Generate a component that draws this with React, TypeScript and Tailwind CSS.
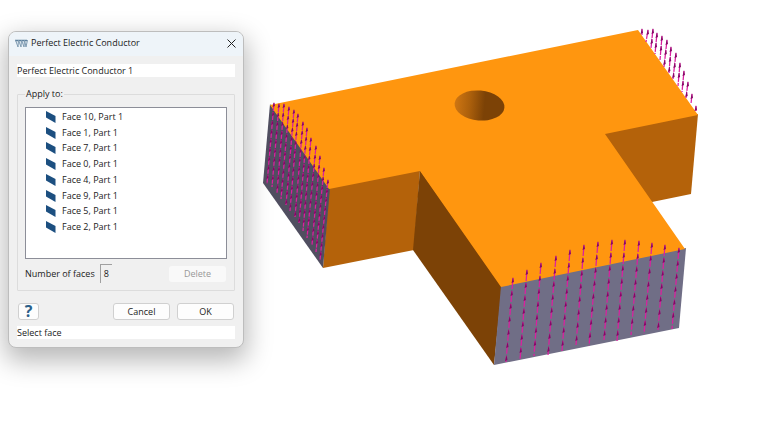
import { useId } from "react"

type Point = [number, number]

const faces = ["Face 10", "Face 1", "Face 7", "Face 0", "Face 4", "Face 9", "Face 5", "Face 2"]

/** Arrow columns per port: tip of the top arrow, foot of the lowest one. */
const frontColumns: [Point, Point][] = [
  [[513, 278], [506, 362]],
  [[527, 270], [520, 360]],
  [[541, 263], [534, 356]],
  [[556, 256], [548, 355]],
  [[570, 250], [562, 351]],
  [[584, 245], [576, 345]],
  [[598, 242], [589, 346]],
  [[612, 240], [604, 340]],
  [[625, 240], [617, 341]],
  [[639, 241], [631, 335]],
  [[652, 243], [644, 334]],
  [[665, 245], [658, 330]],
  [[679, 248], [672, 329]],
]

const leftColumns: [Point, Point][] = [
  [[274, 103], [267, 184]],
  [[279, 104], [272, 187]],
  [[284, 104], [277, 193]],
  [[289, 107], [281, 199]],
  [[294, 110], [286, 205]],
  [[298, 114], [290, 211]],
  [[303, 122], [295, 217]],
  [[307, 128], [299, 223]],
  [[311, 138], [303, 231]],
  [[316, 146], [307, 238]],
  [[320, 156], [312, 245]],
  [[324, 168], [316, 252]],
  [[328, 180], [320, 260]],
]

const rightColumns: [Point, Point][] = [
  [[642, 29], [642, 35]],
  [[648, 30], [646, 42]],
  [[653, 29], [651, 48]],
  [[657, 33], [655, 54]],
  [[662, 36], [660, 60]],
  [[667, 40], [664, 67]],
  [[671, 47], [669, 73]],
  [[676, 53], [673, 79]],
  [[680, 63], [678, 86]],
  [[684, 71], [682, 92]],
  [[688, 82], [686, 98]],
  [[692, 94], [691, 104]],
  [[696, 106], [696, 111]],
]

type ArrowsProps = { columns: [Point, Point][]; pitch: number; gap: number; head: number }

function Arrows({ columns, pitch, gap, head }: ArrowsProps) {
  return (
    <g>
      {columns.map(([[tx, ty], [bx, by]]) => {
        const count = Math.max(1, Math.ceil((by - ty - 4) / pitch))
        const slope = (bx - tx) / (by - ty)
        return (
          <g key={tx}>
            <line
              x1={tx}
              y1={ty}
              x2={bx}
              y2={by}
              stroke="#dc1fa0"
              strokeWidth={1.25}
              strokeDasharray={`${pitch - gap} ${gap}`}
            />
            {Array.from({ length: count }, (_, i) => {
              const y = ty + i * pitch
              const x = tx + (y - ty) * slope
              return (
                <path
                  key={i}
                  d={`M${x} ${y - 1} L${x + 1} ${y + head} L${x - 1.5} ${y + head + 1} Z`}
                  fill="#850866"
                />
              )
            })}
          </g>
        )
      })}
    </g>
  )
}

function Model() {
  const hole = useId()
  return (
    <svg viewBox="244 0 523 428" className="block h-auto w-full" role="img" aria-label="Part 1">
      <defs>
        <linearGradient id={hole}>
          <stop offset="0" stopColor="#cf7612" />
          <stop offset="0.3" stopColor="#ac600c" />
          <stop offset="0.6" stopColor="#7c4206" />
          <stop offset="1" stopColor="#7c4206" />
        </linearGradient>
      </defs>
      <path d="M600 130 L698 114 L691 194 L652 202 L640 195 Z" fill="#b4620a" />
      <path d="M329 188 L420 170 L414 250 L323 268 Z" fill="#b4620a" />
      <path d="M420 170 L502 286 L494 365 L413 250 Z" fill="#7c4206" />
      <path d="M270 104 L330 188 L323 268 L263 183 Z" fill="#504e60" />
      <path d="M501 286 L686 248 L679 328 L494 365 Z" fill="#706e86" />
      <path
        d="M270 105 L638 30 L698 115 L605 134 L685 249 L501 287 L420 171 L329 189 Z"
        fill="#ff960f"
      />
      <ellipse cx="479.5" cy="105.5" rx="25" ry="15" transform="rotate(5 479.5 105.5)" fill={`url(#${hole})`} />
      <Arrows columns={leftColumns} pitch={9} gap={1} head={3} />
      <Arrows columns={rightColumns} pitch={10} gap={1} head={4} />
      <Arrows columns={frontColumns} pitch={13} gap={2} head={4} />
    </svg>
  )
}

function FaceIcon() {
  return (
    <svg viewBox="0 0 10 12" className="h-3 w-[10px]" aria-hidden="true">
      <path d="M0 0 L9.5 5 V12 L0 6.5 Z" fill="#1c4f80" />
    </svg>
  )
}

function ConductorIcon() {
  return (
    <svg viewBox="0 0 13 9" className="h-[9px] w-[13px]" fill="none" aria-hidden="true">
      <path d="M0 1.5 H12" stroke="#5d7f9c" strokeWidth="1.5" />
      <path
        d="M0.5 1 L3 8 L3.5 1 M3.5 1 L6 8 L6.5 1 M6.5 1 L9 8 L9.5 1 M9.5 1 L11 8 L12.5 1"
        stroke="#7f9bb2"
        strokeWidth="1"
      />
    </svg>
  )
}

const button =
  "h-[17px] w-[57px] rounded-[3px] border border-[#d0d0d0] bg-[#fdfdfd] text-center leading-[15px]"

function ConductorDialog() {
  return (
    <section
      role="dialog"
      aria-labelledby="dialog-title"
      className="w-[236px] shrink-0 overflow-hidden rounded-lg border border-[#bdbdbd] bg-[#f0f0f0] shadow-[0_10px_26px_3px_rgba(0,0,0,0.28)]"
    >
      <header className="flex h-6 items-center bg-[#eef4f9] pr-1 pb-0.5 pl-1.5">
        <ConductorIcon />
        <h1 id="dialog-title" className="ml-[3px] flex-1">
          Perfect Electric Conductor
        </h1>
        <button type="button" aria-label="Close" className="flex size-4 items-center justify-center">
          <svg viewBox="0 0 9 9" className="size-[9px]" aria-hidden="true">
            <path d="M0.5 0.5 L8.5 8.5 M8.5 0.5 L0.5 8.5" stroke="#222" strokeWidth="1" />
          </svg>
        </button>
      </header>

      <div className="px-2 pt-2 pb-2">
        <input
          type="text"
          aria-label="Name"
          defaultValue="Perfect Electric Conductor 1"
          className="block h-[13px] w-full bg-white outline-none"
        />

        <fieldset className="mt-[10px] rounded-[1px] border border-[#dcdcdc] px-[7px] pb-[7px]">
          <legend className="h-[14px] px-px leading-[14px]">Apply to:</legend>
          <ul className="mt-[6px] grid h-[152px] auto-rows-fr border border-[#8c8e98] bg-white pt-px pb-[23px] pl-5">
            {faces.map((face) => (
              <li key={face} className="flex items-center gap-[6px]">
                <FaceIcon />
                <span>{face}, Part 1</span>
              </li>
            ))}
          </ul>
          <div className="mt-[5px] flex items-center">
            <span id="face-count">Number of faces</span>
            <output
              aria-labelledby="face-count"
              className="ml-[5px] h-[19px] border-t border-l border-[#a0a0a0] px-[3px] leading-[18px]"
            >
              {faces.length}
            </output>
            <button
              type="button"
              disabled
              className="mr-px ml-auto h-4 w-[57px] rounded-[3px] bg-[#f9f9f9] leading-4 text-[#989898]"
            >
              Delete
            </button>
          </div>
        </fieldset>

        <div className="mt-3 flex gap-[7px] px-px">
          <button
            type="button"
            aria-label="Help"
            className="mr-auto h-[17px] w-[21px] rounded-[3px] border border-[#d0d0d0] bg-[#fdfdfd] text-base leading-[15px] font-bold text-[#2c5f8a]"
          >
            ?
          </button>
          <button type="button" className={button}>
            Cancel
          </button>
          <button type="button" className={button}>
            OK
          </button>
        </div>

        <p role="status" className="mt-[6px] h-[13px] bg-white leading-[13px]">
          Select face
        </p>
      </div>
    </section>
  )
}

export default function App() {
  return (
    <main className="flex min-h-screen items-start overflow-hidden bg-white pl-2 font-['Open_Sans',sans-serif] text-[9px] leading-[14px] text-[#1b1b1b]">
      <div className="relative z-0 pt-[31px]">
        <ConductorDialog />
      </div>
      <div className="relative z-10 min-w-0 flex-1">
        <Model />
      </div>
    </main>
  )
}
